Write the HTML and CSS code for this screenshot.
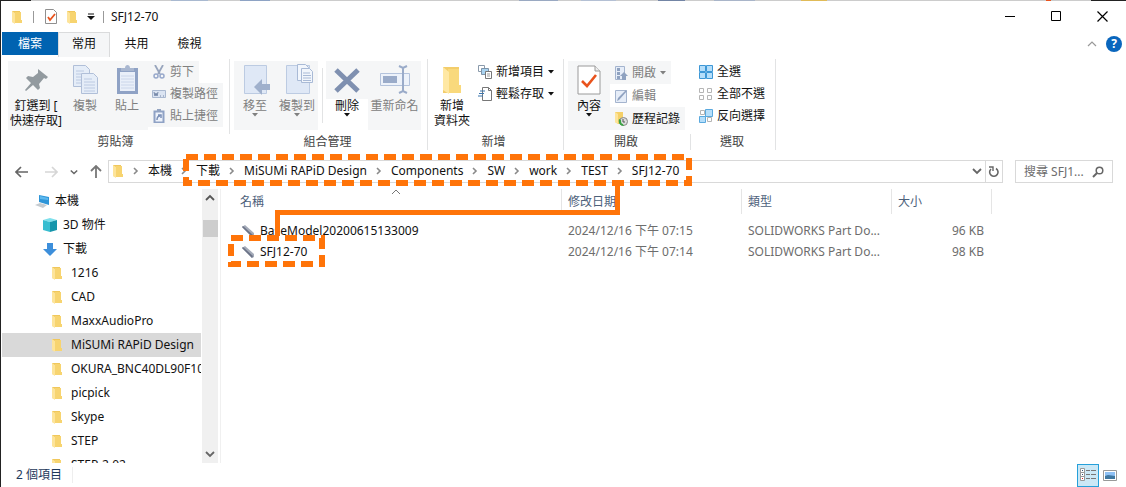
FILE: index.html
```html
<!DOCTYPE html>
<html lang="zh-Hant">

<head>
    <meta charset="UTF-8">
    <meta name="viewport" content="width=device-width, initial-scale=1.0">
    <title>SFJ12-70</title>
    <link rel="stylesheet" href="styles.css">
</head>

<body>

    <!-- Shared icons -->
    <svg class="defs" width="0" height="0" aria-hidden="true">
        <symbol id="folder" viewBox="0 0 12 14">
            <path d="M1 1h8v9l2 1v2H4L1 12z" fill="#f0c75c" />
            <path d="M4 2h6v8h1v3H4z" fill="#f7d470" />
            <path d="M1 1l3 2v11l-3-2z" fill="#fde49a" />
        </symbol>
        <symbol id="chev" viewBox="0 0 6 8">
            <path d="M1 1l3 3-3 3" fill="none" stroke="#8a8a8a" stroke-width="1.6" />
        </symbol>
        <symbol id="down" viewBox="0 0 10 8">
            <path d="M1 2l4 4 4-4" fill="none" stroke="#666" stroke-width="1.8" />
        </symbol>
        <symbol id="tri" viewBox="0 0 6 4">
            <path d="M0 0h6L3 3.5z" fill="currentColor" />
        </symbol>
        <symbol id="check" viewBox="0 0 24 30">
            <path d="M1 1h17l5 5v23H1z" fill="#fff" stroke="#9a9a9a" />
            <path d="M18 1v5h5" fill="#eee" stroke="#9a9a9a" />
            <path d="M5 16l5 5 9-11" fill="none" stroke="#e9531d" stroke-width="2.6" />
        </symbol>
        <symbol id="part" viewBox="0 0 14 14">
            <path d="M1 3l3-2 9 8v3l-2 1z" fill="#a4abb9" />
            <path d="M1 3l10 10 1-2L2 2z" fill="#6c7488" />
        </symbol>
    </svg>

    <div class="window">
        <div class="desktop-edge"></div>

        <header class="titlebar">
            <svg class="ico-folder" width="12" height="14"><use href="#folder" /></svg>
            <span class="bar"></span>
            <svg class="ico-check" width="12" height="15" viewBox="0 0 12 15"><path d="M.5.5h8l3 3v11H.5z" fill="#fff" stroke="#8f8f8f" /><path d="M3 8l2 3 5-6" fill="none" stroke="#e9531d" stroke-width="1.8" /></svg>
            <svg class="ico-folder2" width="12" height="14"><use href="#folder" /></svg>
            <svg class="ico-custom" width="8" height="8" viewBox="0 0 8 8"><path d="M1 1h6" stroke="#111" /><path d="M0 3h8L4 7z" fill="#111" /></svg>
            <span class="bar bar-title"></span>
            <span class="title">SFJ12-70</span>
            <div class="win-buttons">
                <button aria-label="最小化"><svg width="11" height="11"><path d="M0 5.500h10" stroke="#000" /></svg></button>
                <button aria-label="最大化"><svg width="11" height="11"><path d="M.5.5h9v9h-9z" fill="none" stroke="#000" /></svg></button>
                <button aria-label="關閉"><svg width="11" height="11"><path d="M.5.5l10 10M10.500.5l-10 10" stroke="#000" stroke-width="1.2" /></svg></button>
            </div>
        </header>

        <nav class="tabs">
            <button class="tab file">檔案</button>
            <button class="tab active">常用</button>
            <button class="tab">共用</button>
            <button class="tab">檢視</button>
            <div class="tabs-right">
                <svg width="10" height="8" viewBox="0 0 10 8"><path d="M1 6l4-4 4 4" fill="none" stroke="#999" stroke-width="1.2" /></svg>
                <button class="help" aria-label="說明">?</button>
            </div>
        </nav>

        <section class="ribbon">
            <!-- Clipboard -->
            <div class="group g-clipboard">
                <div class="tools">
                    <button class="big shade w-pin">
                        <svg width="32" height="32" viewBox="0 0 32 32"><path d="M18 5l10 8-2 2-2-1-5 6 1 4-2 2-5-5-7 6-1-1 6-7-5-5 2-2 5 1 5-4v-2z" fill="#929a9f" /></svg>
                        <span>釘選到 [<br>快速存取]</span>
                    </button>
                    <button class="big shade dim">
                        <svg width="32" height="32" viewBox="0 0 32 32"><g fill="#e5edf8" stroke="#b0bfd8"><path d="M4.500 1.500h12l4 4v17h-16z" /><path d="M12.500 9.500h12l4 4v16h-16z" /></g><path d="M7 7h8M7 10h5M7 13h5M7 16h5M7 19h5M15 15h8M15 18h11M15 21h11M15 24h11M15 27h11" stroke="#bccae2" /></svg>
                        <span>複製</span>
                    </button>
                    <button class="big shade dim">
                        <svg width="32" height="32" viewBox="0 0 32 32"><path d="M6 4h21v26H6z" fill="#8fa2c5" /><path d="M9 8h15v19H9z" fill="#e9eff9" /><path d="M10 12h13M10 15h13M10 18h13M10 21h13M10 24h13" stroke="#cbd6ea" /><path d="M10 4h4c0-4 5-4 5 0h4v3H10z" fill="#a9b7d0" /></svg>
                        <span>貼上</span>
                    </button>
                    <div class="stack">
                        <button class="small shade dim">
                            <svg width="14" height="14" viewBox="0 0 14 14"><path d="M3 0l5 9M11 0L6 9" stroke="#98a5bd" stroke-width="1.8" /><g fill="none" stroke="#98a9cb" stroke-width="1.5"><circle cx="4" cy="11" r="2" /><circle cx="10" cy="11" r="2" /></g></svg>
                            剪下
                        </button>
                        <button class="small shade dim">
                            <svg width="14" height="14" viewBox="0 0 14 14"><path d="M.5 3.500h13v7H.5z" fill="#dbe4f2" stroke="#a9b8d0" /><path d="M2 5l1 4 1-3 1 3 1-4M8 9h1M11 9h1" fill="none" stroke="#7688a8" /></svg>
                            複製路徑
                        </button>
                        <button class="small shade dim">
                            <svg width="14" height="14" viewBox="0 0 14 14"><path d="M2.500 2.500h9v11h-9z" fill="#eef3fb" stroke="#8fa2c5" stroke-width="2" /><path d="M5 0h4v3H5z" fill="#93a4c2" /><path d="M5 11c0-3 1-4 3-4M6 6h3v3" fill="none" stroke="#7b90b8" stroke-width="1.5" /></svg>
                            貼上捷徑
                        </button>
                    </div>
                </div>
                <div class="caption">剪貼簿</div>
            </div>
            <span class="sep sep-short"></span>

            <!-- Organize -->
            <div class="group g-organize">
                <div class="tools">
                    <button class="big shade dim">
                        <svg width="32" height="32" viewBox="0 0 32 32"><path d="M5.500 1.500h22v28h-22z" fill="#dfe8f6" stroke="#bccbe2" /><path d="M15 23l8-8v5h8v6h-8v5z" fill="#9fb0cc" /></svg>
                        <span>移至</span>
                        <svg class="tri" width="6" height="4"><use href="#tri" /></svg>
                    </button>
                    <button class="big shade dim">
                        <svg width="32" height="32" viewBox="0 0 32 32"><path d="M5.500 1.500h23v28h-23z" fill="#dfe8f6" stroke="#bccbe2" /><g fill="#f2f6fc" stroke="#a9bad6"><path d="M16.500.5h8l3 3v13h-11z" /><path d="M20.500 4.500h8l3 3v11h-11z" /></g><path d="M22 9h7M22 11.500h8M22 14h8M22 16.500h8" stroke="#a9bad6" /></svg>
                        <span>複製到</span>
                        <svg class="tri" width="6" height="4"><use href="#tri" /></svg>
                    </button>
                    <span class="inner-sep"></span>
                    <button class="big shade-top">
                        <svg width="32" height="32" viewBox="0 0 32 32"><path d="M5 6l22 21M27 6L5 27" stroke="#7f90b0" stroke-width="5" /></svg>
                        <span>刪除</span>
                        <svg class="tri" width="6" height="4"><use href="#tri" /></svg>
                    </button>
                    <button class="big shade dim w-rename">
                        <svg width="32" height="32" viewBox="0 0 32 32"><path d="M1.500 9.500h29v12h-29z" fill="#edf2fa" stroke="#b4c3dc" /><path d="M4 12h14v7H4z" fill="#9aabc9" /><path d="M20 2l4 2 4-2M24 4v23M20 29l4-2 4 2" fill="none" stroke="#9aabc9" stroke-width="2" /></svg>
                        <span>重新命名</span>
                    </button>
                </div>
                <div class="caption">組合管理</div>
            </div>
            <span class="sep"></span>

            <!-- New -->
            <div class="group g-new">
                <div class="tools">
                    <button class="big w-newfolder">
                        <svg width="32" height="32" viewBox="0 0 32 32"><path d="M7 3h16v18h2v8H7z" fill="#f3cd6b" /><path d="M12 5h11v16h2v8H12z" fill="#f9d97c" /><path d="M7 3l6 5v22l-6-4z" fill="#ffe8a3" /></svg>
                        <span>新增<br>資料夾</span>
                    </button>
                    <div class="stack">
                        <button class="small">
                            <svg width="14" height="14" viewBox="0 0 14 14"><path d="M.5.5h6v6h-6z" fill="#fff" stroke="#8a9aab" /><path d="M3.500 3.500h7v6h-7z" fill="#a9d3f0" stroke="#7d93a8" /><path d="M7.500 6.500h6v7h-6z" fill="#fff" stroke="#777" /><path d="M9 9h3M9 11h3" stroke="#999" /></svg>
                            新增項目
                            <svg class="tri" width="6" height="4"><use href="#tri" /></svg>
                        </button>
                        <button class="small">
                            <svg width="14" height="14" viewBox="0 0 14 14"><path d="M4.500.5h6l3 3v10h-9z" fill="#fff" stroke="#777" /><path d="M10.500.5v3h3" fill="none" stroke="#777" /><path d="M2 4h5M1 6.500h5M0 9h5" stroke="#3c76ae" stroke-width="1.2" /></svg>
                            輕鬆存取
                            <svg class="tri" width="6" height="4"><use href="#tri" /></svg>
                        </button>
                    </div>
                </div>
                <div class="caption">新增</div>
            </div>
            <span class="sep"></span>

            <!-- Open -->
            <div class="group g-open">
                <div class="tools">
                    <button class="big shade">
                        <svg width="32" height="32" viewBox="-4 0 32 32"><use href="#check" width="24" height="30" y="1" /></svg>
                        <span>內容</span>
                        <svg class="tri" width="6" height="4"><use href="#tri" /></svg>
                    </button>
                    <div class="stack stack-open">
                        <button class="small shade dim">
                            <svg width="14" height="14" viewBox="0 0 14 14"><path d="M1.500.5h9v13h-9z" fill="#e6edf8" stroke="#a4b4ce" /><path d="M3 2h3v3H3zM3 6h3v3H3zM3 10h3v3H3z" fill="#8fa2c0" /><path d="M10 6l4 4h-2v4H8v-4H6z" fill="#8fa2c0" /></svg>
                            開啟
                            <svg class="tri" width="6" height="4"><use href="#tri" /></svg>
                        </button>
                        <button class="small dim">
                            <svg width="14" height="14" viewBox="0 0 14 14"><path d="M1.500 1.500h11v12h-11z" fill="#e6edf8" stroke="#a4b4ce" /><path d="M3 12l1-3 8-8 1 1-8 9z" fill="#8fa2c0" /></svg>
                            編輯
                        </button>
                        <button class="small shade">
                            <svg width="14" height="14" viewBox="0 0 14 14"><path d="M1 0h8v12H4l-3-2z" fill="#f5d068" /><path d="M1 0l3 2v10l-3-2z" fill="#fde49a" /><circle cx="9.500" cy="9.500" r="4" fill="#ddd" stroke="#888" /><path d="M9 7v3h2" fill="none" stroke="#555" /><path d="M5 7c-1 4 1 7 5 7l-1-2c-2 0-2-3-2-4z" fill="#3aa244" /></svg>
                            歷程記錄
                        </button>
                    </div>
                </div>
                <div class="caption">開啟</div>
            </div>
            <span class="sep sep-low"></span>

            <!-- Select -->
            <div class="group g-select">
                <div class="tools">
                    <div class="stack">
                        <button class="small">
                            <svg width="14" height="14" viewBox="0 0 14 14"><path d="M.5.5h6v6h-6zM7.500.5h6v6h-6zM.5 7.500h6v6h-6zM7.500 7.500h6v6h-6z" fill="#b5defa" stroke="#3d97d6" /></svg>
                            全選
                        </button>
                        <button class="small">
                            <svg width="14" height="14" viewBox="0 0 14 14"><path d="M.5 1.500h4v4h-4zM8.500 1.500h4v4h-4zM.5 8.500h4v4h-4zM8.500 8.500h4v4h-4z" fill="#fff" stroke="#b5b5b5" /></svg>
                            全部不選
                        </button>
                        <button class="small">
                            <svg width="14" height="14" viewBox="0 0 14 14"><path d="M1.500 1.500h4v4h-4zM8.500 8.500h4v4h-4z" fill="#fff" stroke="#b5b5b5" /><path d="M6.500.5h7v7h-7zM.5 7.500h6v6h-6z" fill="#b5defa" stroke="#5aa9de" /></svg>
                            反向選擇
                        </button>
                    </div>
                </div>
                <div class="caption">選取</div>
            </div>
            <span class="sep"></span>
        </section>

        <div class="addressbar">
            <div class="history">
                <button aria-label="上一頁"><svg width="13" height="12" viewBox="0 0 13 12"><path d="M13 6H1M6 1L1 6l5 5" fill="none" stroke="#666" stroke-width="1.7" /></svg></button>
                <button aria-label="下一頁"><svg width="13" height="12" viewBox="0 0 13 12"><path d="M0 6h12M7 1l5 5-5 5" fill="none" stroke="#d6d6d6" stroke-width="1.7" /></svg></button>
                <button class="recent" aria-label="最近的位置"><svg width="8" height="8"><use href="#down" /></svg></button>
                <button aria-label="上移"><svg width="12" height="13" viewBox="0 0 12 13"><path d="M6 13V1M1 6l5-5 5 5" fill="none" stroke="#777" stroke-width="1.8" /></svg></button>
            </div>
            <div class="path">
                <svg class="path-icon" width="12" height="14"><use href="#folder" /></svg>
                <svg class="chev" width="6" height="8"><use href="#chev" /></svg>
                <a href="#">本機</a>
                <svg class="chev" width="6" height="8"><use href="#chev" /></svg>
                <a href="#">下載</a>
                <svg class="chev" width="6" height="8"><use href="#chev" /></svg>
                <a href="#">MiSUMi RAPiD Design</a>
                <svg class="chev" width="6" height="8"><use href="#chev" /></svg>
                <a href="#">Components</a>
                <svg class="chev" width="6" height="8"><use href="#chev" /></svg>
                <a href="#">SW</a>
                <svg class="chev" width="6" height="8"><use href="#chev" /></svg>
                <a href="#">work</a>
                <svg class="chev" width="6" height="8"><use href="#chev" /></svg>
                <a href="#">TEST</a>
                <svg class="chev" width="6" height="8"><use href="#chev" /></svg>
                <a href="#">SFJ12-70</a>
                <button class="path-drop" aria-label="先前的位置"><svg width="10" height="8"><use href="#down" /></svg></button>
                <button class="refresh" aria-label="重新整理"><svg width="12" height="12" viewBox="0 0 12 12"><path d="M8 2.500A4.200 4.200 0 1 1 3 3" fill="none" stroke="#666" stroke-width="1.6" /><path d="M1 1h4v4" fill="none" stroke="#666" stroke-width="1.4" /></svg></button>
            </div>
            <div class="search">
                <input type="text" placeholder="搜尋 SFJ1..." aria-label="搜尋 SFJ12-70">
                <svg width="12" height="12" viewBox="0 0 12 12"><circle cx="7.500" cy="4.500" r="3.300" fill="none" stroke="#666" stroke-width="1.5" /><path d="M5 7l-4 4" stroke="#666" stroke-width="2" /></svg>
            </div>
        </div>

        <main class="content">
            <aside class="sidebar">
                <ul class="tree">
                    <li class="lv1"><a href="#"><svg width="16" height="14" viewBox="0 0 16 14"><path d="M4 1l10 2v8L4 8z" fill="#2e95d8" /><path d="M5 2l8 2v2L5 5z" fill="#5db8ee" /><path d="M0 11l5-2 7 2-4 3z" fill="#c5cbd0" /></svg>本機</a></li>
                    <li class="lv2"><a href="#"><svg width="14" height="14" viewBox="0 0 14 14"><path d="M0 2l7-2 7 2-7 2z" fill="#7ee0ec" /><path d="M0 2l7 2v10l-7-2z" fill="#38bdd0" /><path d="M14 2L7 4v10l7-2z" fill="#1595ab" /></svg>3D 物件</a></li>
                    <li class="lv2"><a href="#"><svg width="14" height="14" viewBox="0 0 14 14"><path d="M4 1h6v6h4l-7 7-7-7h4z" fill="#3d8fdb" /></svg>下載</a></li>
                    <li class="lv3"><a href="#"><svg width="12" height="14"><use href="#folder" /></svg>1216</a></li>
                    <li class="lv3"><a href="#"><svg width="12" height="14"><use href="#folder" /></svg>CAD</a></li>
                    <li class="lv3"><a href="#"><svg width="12" height="14"><use href="#folder" /></svg>MaxxAudioPro</a></li>
                    <li class="lv3 selected"><a href="#"><svg width="12" height="14"><use href="#folder" /></svg>MiSUMi RAPiD Design</a></li>
                    <li class="lv3"><a href="#"><svg width="12" height="14"><use href="#folder" /></svg>OKURA_BNC40DL90F10</a></li>
                    <li class="lv3"><a href="#"><svg width="12" height="14"><use href="#folder" /></svg>picpick</a></li>
                    <li class="lv3"><a href="#"><svg width="12" height="14"><use href="#folder" /></svg>Skype</a></li>
                    <li class="lv3"><a href="#"><svg width="12" height="14"><use href="#folder" /></svg>STEP</a></li>
                    <li class="lv3"><a href="#"><svg width="12" height="14"><use href="#folder" /></svg>STEP-2.02</a></li>
                </ul>
                <div class="scrollbar">
                    <svg width="10" height="8" viewBox="0 0 10 8"><path d="M1 6l4-4 4 4" fill="none" stroke="#555" stroke-width="1.8" /></svg>
                    <span class="thumb"></span>
                    <svg width="10" height="8"><use href="#down" /></svg>
                </div>
            </aside>

            <section class="files">
                <table>
                    <colgroup>
                        <col class="c-name">
                        <col class="c-date">
                        <col class="c-type">
                        <col class="c-size">
                    </colgroup>
                    <thead>
                        <tr>
                            <th class="sorted">名稱<svg width="10" height="6" viewBox="0 0 10 6"><path d="M1 5l4-4 4 4" fill="none" stroke="#777" /></svg></th>
                            <th>修改日期</th>
                            <th>類型</th>
                            <th>大小</th>
                        </tr>
                    </thead>
                    <tbody>
                        <tr>
                            <td><svg width="14" height="14"><use href="#part" /></svg>BaseModel20200615133009</td>
                            <td>2024/12/16 下午 07:15</td>
                            <td>SOLIDWORKS Part Do...</td>
                            <td>96 KB</td>
                        </tr>
                        <tr>
                            <td><svg width="14" height="14"><use href="#part" /></svg>SFJ12-70</td>
                            <td>2024/12/16 下午 07:14</td>
                            <td>SOLIDWORKS Part Do...</td>
                            <td>98 KB</td>
                        </tr>
                    </tbody>
                </table>
            </section>
        </main>

        <footer class="statusbar">
            <span class="count">2 個項目</span>
            <div class="views">
                <button class="view on" aria-label="詳細資料"><svg width="18" height="16" viewBox="0 0 18 16"><g fill="#fff" stroke="#999"><path d="M1.500 1.500h4v4h-4zM1.500 5.500h4v4h-4zM1.500 9.500h4v4h-4z" /></g><path d="M3 3h1v1H3zM3 7h1v1H3z" fill="#357" /><path d="M3 11h1v1H3z" fill="#d22" /><path d="M7 3.500h4M12 3.500h5M7 7.500h4M12 7.500h5M7 11.500h4M12 11.500h5" stroke="#777" /></svg></button>
                <button class="view" aria-label="大圖示"><svg width="14" height="11" viewBox="0 0 14 11"><path d="M.5.5h13v10H.5z" fill="#fff" stroke="#999" /><path d="M2 2h10v7H2z" fill="#8fc1f5" /><path d="M2 6l3-1 7 1v3H2z" fill="#3f77a0" /></svg></button>
            </div>
        </footer>

        <!-- Callout drawn over the window -->
        <svg class="callout" width="700" height="280">
            <g fill="none" stroke="#ff7409">
                <rect x="186" y="157" width="503" height="26" stroke-width="6" stroke-dasharray="12 6" />
                <rect x="231" y="238" width="91" height="26" stroke-width="6" stroke-dasharray="12 6" />
                <path d="M617.500 184v28.500h-340V236" stroke-width="5" />
            </g>
        </svg>
    </div>

</body>

</html>
```
FILE: styles.css
```css
* {
    box-sizing: border-box;
}

body {
    margin: 0;
    font-family: "Noto Sans", "Noto Sans CJK TC", sans-serif;
    font-size: 12px;
    line-height: 16px;
    color: #111;
    background: #fff;
}

button {
    margin: 0;
    padding: 0;
    border: 0;
    background: none;
    font: inherit;
    color: inherit;
}

a {
    color: inherit;
    text-decoration: none;
}

svg {
    display: block;
    flex: none;
}

.defs {
    position: absolute;
}

.window {
    position: relative;
    display: flex;
    flex-direction: column;
    height: 100vh;
    border-left: 1px solid #222;
    overflow: hidden;
}

/* Strip of desktop visible above the window */
.desktop-edge {
    flex: none;
    height: 1px;
    background: linear-gradient(90deg, #222 30px, #ccc 30px 170px, #a9b9d0 170px 207px, #ccc 207px 239px, #8ea3c4 239px 269px, #ccc 269px 518px, #9aa9c2 518px 557px, #ccc 557px 580px, #b4c0d4 580px 615px, #ccc 615px 657px, #7385a5 657px 684px, #ccc 684px 713px, #a9b5c9 713px 754px, #ccc 754px 800px, #e0bb58 800px 826px, #ccc 826px 1045px, #e9531d 1045px 1050px, #ccc 1050px 1090px, #222 1090px);
}

/* Title bar */
.titlebar {
    display: flex;
    align-items: center;
    flex: none;
    height: 31px;
    padding: 0 1px 0 10px;
}

.bar {
    width: 1px;
    height: 12px;
    margin: 0 11px 0 10px;
    background: #999;
}

.bar-title {
    margin: 0 7px 0 8px;
}

.ico-folder2 {
    margin: 0 9px;
}

.win-buttons {
    display: flex;
    margin-left: auto;
}

.win-buttons button {
    display: flex;
    align-items: center;
    justify-content: center;
    width: 46px;
    height: 31px;
}

/* Tabs */
.tabs {
    display: flex;
    flex: none;
    height: 25px;
    padding-left: 1px;
}

.tab {
    width: 53px;
    height: 23px;
}

.tab.file {
    width: 56px;
    background: #0063b1;
    color: #fff;
}

.tab.active {
    width: 52px;
    height: 25px;
    padding-bottom: 2px;
    background: #f5f6f7;
    border: 1px solid #dadbdc;
    border-bottom: 0;
}

.tabs-right {
    display: flex;
    align-items: center;
    gap: 9px;
    height: 23px;
    margin-left: auto;
    padding-right: 4px;
}

.help {
    width: 16px;
    height: 16px;
    border-radius: 50%;
    background: #0a66bd;
    color: #fff;
    font-weight: bold;
}

/* Ribbon */
.ribbon {
    display: flex;
    flex: none;
    height: 97px;
    padding-top: 2px;
}

.group {
    flex: none;
    padding: 2px 4px 0;
}

.g-clipboard {
    width: 228px;
    padding-left: 7px;
}

.g-organize {
    width: 197px;
}

.g-new {
    width: 135px;
    padding-left: 2px;
}

.g-open {
    width: 126px;
}

.g-select {
    width: 84px;
}

.sep {
    width: 1px;
    height: 91px;
    background: #e2e3e4;
}

.sep-short {
    height: 75px;
}

.sep-low {
    height: 16px;
    margin-top: 75px;
}

.tools {
    display: flex;
    height: 73px;
}

.caption {
    padding-right: 2px;
    text-align: center;
    color: #444;
}

.big {
    display: flex;
    flex-direction: column;
    align-items: center;
    gap: 2px;
    flex: none;
    width: 42px;
    height: 69px;
    padding-top: 3px;
    line-height: 15px;
    white-space: nowrap;
}

.big .tri {
    margin-top: -2px;
}

.w-pin {
    width: 56px;
}

.w-rename {
    width: 53px;
}

.w-newfolder {
    width: 44px;
}

.shade {
    background: #f5f6f7;
}

.shade-top {
    background: linear-gradient(#f5f6f7 38px, transparent 38px);
}

.dim {
    color: #808080;
}

.inner-sep {
    width: 1px;
    height: 55px;
    margin: 7px 3px 0 4px;
    background: #e2e3e4;
}

.stack {
    display: flex;
    flex-direction: column;
    align-items: flex-start;
}

.small {
    display: flex;
    align-items: center;
    gap: 4px;
    height: 22px;
    padding: 0 5px 0 4px;
    white-space: nowrap;
}

.stack-open .small {
    height: 23px;
}

/* Address bar */
.addressbar {
    display: flex;
    flex: none;
    height: 35px;
    padding: 6px 13px 6px 14px;
}

.history {
    display: flex;
    align-items: center;
    gap: 17px;
    width: 93px;
}

.history .recent {
    margin: 0 -5px;
}

.path {
    display: flex;
    align-items: center;
    flex: 1;
    padding-bottom: 1px;
    border: 1px solid #d9d9d9;
    white-space: nowrap;
}

.path-icon {
    margin-left: 3px;
}

.chev {
    margin: 0 9px;
}

.path-drop {
    margin-left: auto;
    padding-right: 3px;
}

.refresh {
    display: flex;
    align-items: center;
    align-self: stretch;
    margin-bottom: -1px;
    padding: 0 2px;
    border-left: 1px solid #d9d9d9;
}

.search {
    display: flex;
    align-items: center;
    width: 98px;
    margin-left: 12px;
    padding: 0 8px;
    border: 1px solid #d9d9d9;
}

.search input {
    flex: 1;
    min-width: 0;
    padding: 0;
    border: 0;
    outline: none;
    background: none;
    font: inherit;
}

.search input::placeholder {
    color: #6d6d6d;
    opacity: 1;
}

/* Content */
.content {
    display: flex;
    flex: 1;
    min-height: 0;
}

.sidebar {
    display: flex;
    flex: none;
    width: 220px;
    border-right: 1px solid #f0f0f0;
}

.tree {
    width: 200px;
    margin: 0 1px 0 0;
    padding: 0 0 0 1px;
    list-style: none;
    overflow: hidden;
}

.tree a {
    display: flex;
    align-items: center;
    gap: 7px;
    height: 24px;
    white-space: nowrap;
}

.lv1 a {
    padding-left: 33px;
    gap: 4px;
}

.lv2 a {
    padding-left: 41px;
    gap: 6px;
}

.lv3 a {
    padding-left: 49px;
    gap: 8px;
}

.tree .selected {
    background: #d9d9d9;
}

.scrollbar {
    display: flex;
    flex-direction: column;
    align-items: center;
    width: 16px;
    padding: 5px 0;
    background: #f0f0f0;
}

.thumb {
    width: 15px;
    height: 17px;
    margin: 18px 0 auto;
    background: #cdcdcd;
}

/* File list */
.files {
    flex: 1;
    min-width: 0;
}

table {
    width: 771px;
    table-layout: fixed;
    border-collapse: separate;
    border-spacing: 0;
}

.c-name {
    width: 341px;
}

.c-date {
    width: 180px;
}

.c-type {
    width: 150px;
}

.c-size {
    width: 100px;
}

th {
    height: 25px;
    padding: 0 6px;
    border-right: 1px solid #e5e5e5;
    font-weight: normal;
    text-align: left;
    color: #4c607a;
}

th:first-child {
    padding-left: 19px;
}

.sorted {
    position: relative;
}

.sorted svg {
    position: absolute;
    top: 0;
    left: 50%;
}

tbody::before {
    content: "";
    display: block;
    height: 6px;
}

td {
    height: 21px;
    padding: 0 8px 0 6px;
    color: #6d6d6d;
    white-space: nowrap;
}

td:first-child {
    padding-left: 20px;
    color: #111;
}

td:last-child {
    text-align: right;
}

td svg {
    display: inline-block;
    margin-right: 5px;
    vertical-align: middle;
}

/* Status bar */
.statusbar {
    display: flex;
    align-items: center;
    flex: none;
    height: 24px;
    padding: 0 5px 0 15px;
}

.count {
    padding-right: 10px;
    border-right: 1px solid #eee;
    color: #1e395b;
}

.views {
    display: flex;
    align-items: center;
    margin-left: auto;
}

.view {
    display: flex;
    align-items: center;
    justify-content: center;
    width: 22px;
    height: 23px;
}

.view.on {
    border: 1px solid #26a0da;
    background: #cbe8f6;
}

.callout {
    position: absolute;
    top: 0;
    left: -1px;
}
```
